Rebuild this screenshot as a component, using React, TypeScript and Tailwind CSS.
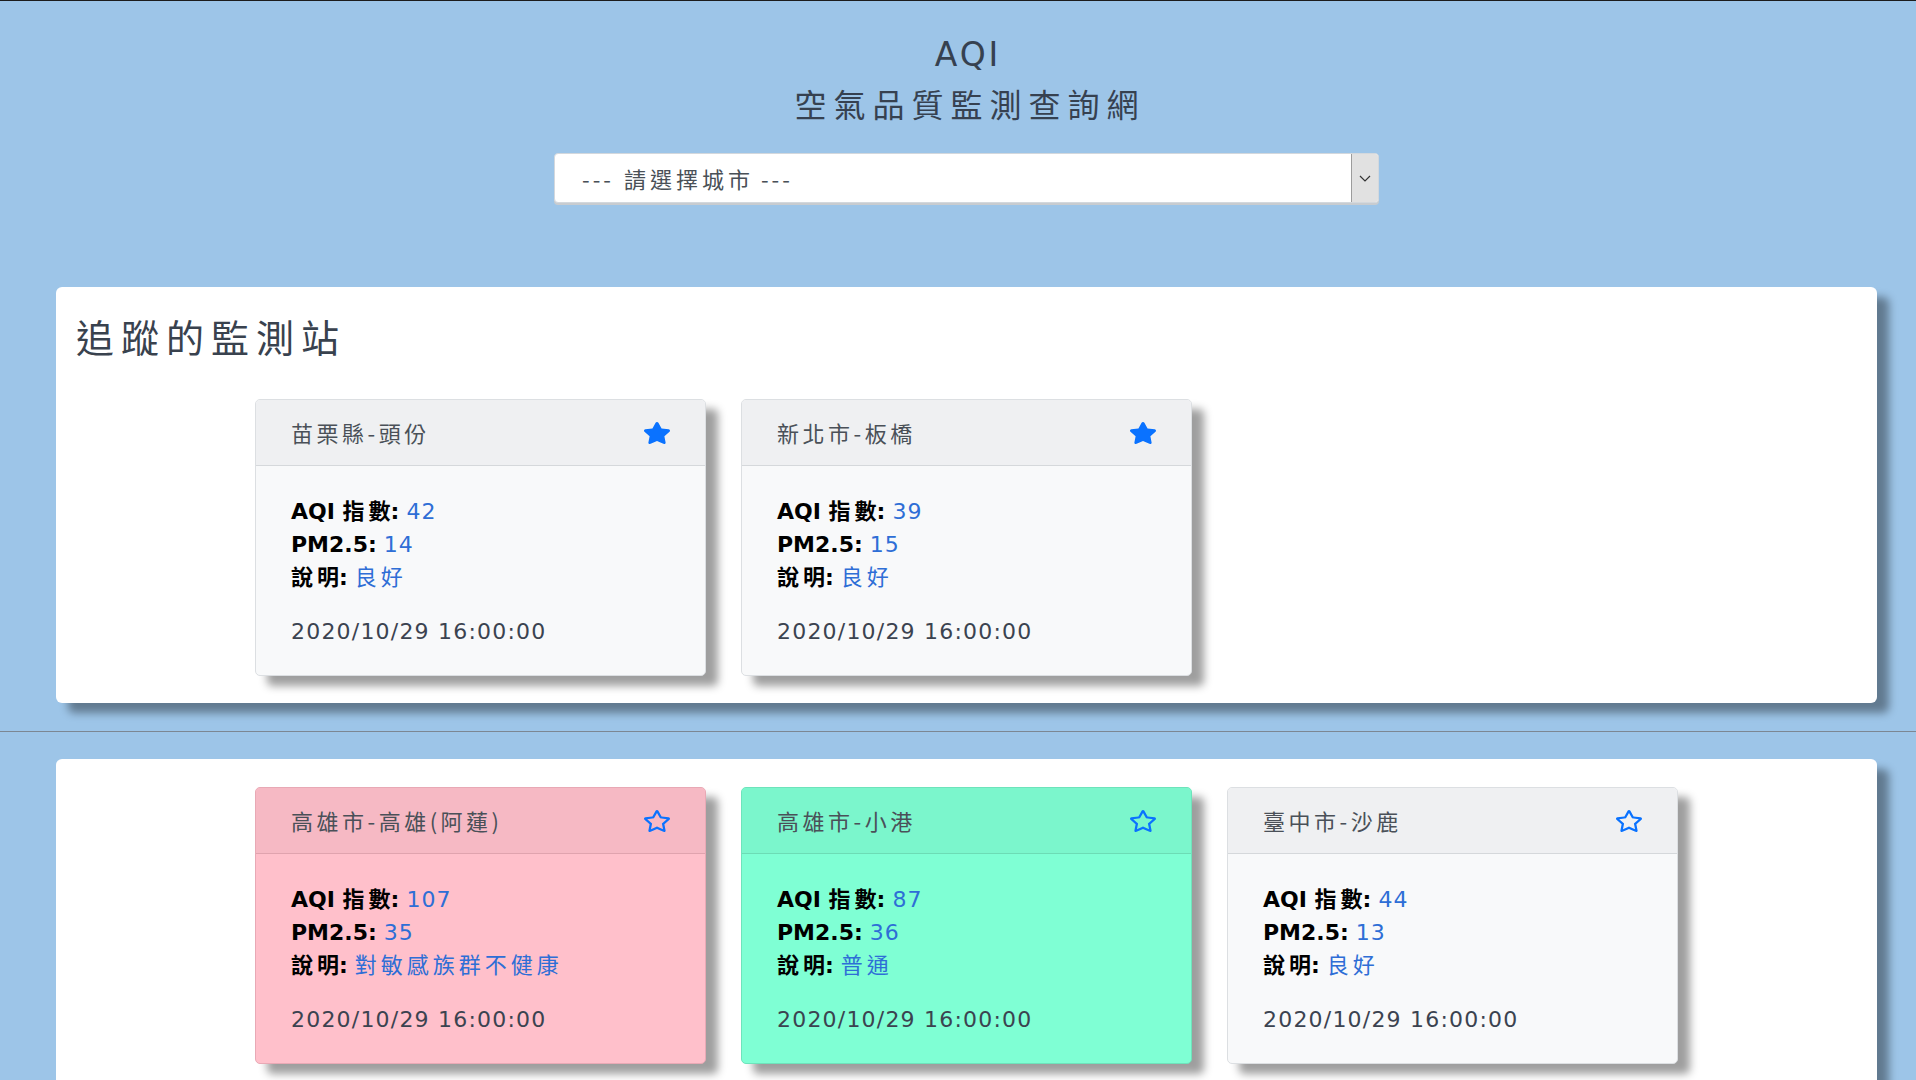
import React from "react";
import { FaStar, FaRegStar } from "react-icons/fa";

type Tone = "light" | "pink" | "green";

type Station = {
    name: string;
    aqi: number;
    pm25: number;
    status: string;
    time: string;
    tone: Tone;
    tracked: boolean;
};

const trackedStations: Station[] = [
    { name: "苗栗縣-頭份", aqi: 42, pm25: 14, status: "良好", time: "2020/10/29 16:00:00", tone: "light", tracked: true },
    { name: "新北市-板橋", aqi: 39, pm25: 15, status: "良好", time: "2020/10/29 16:00:00", tone: "light", tracked: true },
];

const cityStations: Station[] = [
    { name: "高雄市-高雄(阿蓮)", aqi: 107, pm25: 35, status: "對敏感族群不健康", time: "2020/10/29 16:00:00", tone: "pink", tracked: false },
    { name: "高雄市-小港", aqi: 87, pm25: 36, status: "普通", time: "2020/10/29 16:00:00", tone: "green", tracked: false },
    { name: "臺中市-沙鹿", aqi: 44, pm25: 13, status: "良好", time: "2020/10/29 16:00:00", tone: "light", tracked: false },
];

const tones: Record<Tone, { card: string; head: string }> = {
    light: { card: "bg-[#f8f9fa] border-[#dcdfe2]", head: "bg-[#eff0f2] border-[#d5d8db]" },
    pink: { card: "bg-[#ffc0cb] border-[#e8a9b5]", head: "bg-[#f6b9c4] border-[#e0a3ae]" },
    green: { card: "bg-[#7fffd4] border-[#6ee3bb]", head: "bg-[#7bf6cc] border-[#6cdcb5]" },
};

// CJK runs get extra tracking, but no trailing gap after the last glyph
function Zh({ text, className = "" }: { text: string; className?: string }) {
    return (
        <span className={className}>
            <span className="tracking-[4px]">{text.slice(0, -1)}</span>
            {text.slice(-1)}
        </span>
    );
}

function StationCard({ station }: { station: Station }) {
    const t = tones[station.tone];
    const Star = station.tracked ? FaStar : FaRegStar;

    return (
        <div className={`rounded-[5px] border overflow-hidden shadow-[12px_10px_8px_rgba(0,0,0,0.38)] ${t.card}`}>
            <div className={`h-[66px] border-b flex items-center justify-between pl-[35px] pr-[34px] ${t.head}`}>
                <span className="font-['Noto_Sans_CJK_TC',sans-serif] text-[22px] leading-[33px] tracking-[3.5px] text-[#4a5058]">
                    {station.name}
                </span>
                <Star className="w-[28px] h-[22px] text-[#0a72ff]" preserveAspectRatio="none" />
            </div>
            <div className="pt-[29px] pb-[27px] pl-[35px] font-['DejaVu_Sans','Noto_Sans_CJK_TC',sans-serif] text-[22px] leading-[33px] text-black">
                <div>
                    <b>AQI <Zh text="指數" />:</b> <span className="tracking-[1px] text-[#2e6ed6]">{station.aqi}</span>
                </div>
                <div>
                    <b>PM2.5:</b> <span className="tracking-[1px] text-[#2e6ed6]">{station.pm25}</span>
                </div>
                <div>
                    <b><Zh text="說明" />:</b> <Zh text={station.status} className="text-[#2e6ed6]" />
                </div>
                <div className="mt-[21px] tracking-[1.2px] text-[#3b4350]">{station.time}</div>
            </div>
        </div>
    );
}

function CardGrid({ stations }: { stations: Station[] }) {
    return (
        <div className="flex justify-center">
            <div className="grid grid-cols-[451px_451px_451px] gap-[35px]">
                {stations.map((s) => (
                    <StationCard key={s.name} station={s} />
                ))}
            </div>
        </div>
    );
}

export default function App() {
    return (
        <div className="min-h-screen bg-[#9dc5e8] border-t border-[#1c1c1c] overflow-hidden">
            <div className="pl-[56px] pr-[39px]">
                <h1 className="pt-[30px] text-center text-[#364150]">
                    <div className="pl-[3px] font-['DejaVu_Sans',sans-serif] text-[33px] leading-[48px] tracking-[3px]">AQI</div>
                    <div className="pl-[7px] font-['Noto_Sans_CJK_TC',sans-serif] text-[32px] leading-[48px] tracking-[7px]">
                        空氣品質監測查詢網
                    </div>
                </h1>

                <div className="mt-[26px] mx-auto w-[825px] h-[50px] flex rounded-[4px] border border-[#d3d8dd] bg-white shadow-[0_2px_0_#c8ccd0] overflow-hidden">
                    <div className="flex-1 flex items-center pl-[27px] font-['Noto_Sans_CJK_TC',sans-serif] text-[22px] text-[#495057]">
                        <span className="tracking-[3px]">---</span>
                        <span className="ml-[10px] mr-[11px]">
                            <Zh text="請選擇城市" />
                        </span>
                        <span className="tracking-[3px]">---</span>
                    </div>
                    <div className="w-[27px] flex items-center justify-center bg-[#e1e1e1] border-l border-[#9c9c9c]">
                        <svg width="12" height="7" viewBox="0 0 12 7">
                            <path d="M1 1l5 5 5-5" stroke="#333" strokeWidth="1.2" fill="none" />
                        </svg>
                    </div>
                </div>

                <section className="mt-[84px] rounded-[6px] bg-white pt-[26px] pb-[27px] shadow-[12px_10px_8px_rgba(0,0,0,0.38)]">
                    <h2 className="pl-[20px] font-['Noto_Sans_CJK_TC',sans-serif] text-[38px] leading-[46px] tracking-[7px] text-[#39424e]">
                        追蹤的監測站
                    </h2>
                    <div className="mt-[40px]">
                        <CardGrid stations={trackedStations} />
                    </div>
                </section>
            </div>

            <div className="mt-[28px] h-px bg-[#7c8793]" />

            <div className="pl-[56px] pr-[39px]">
                <section className="mt-[27px] rounded-[6px] bg-white pt-[28px] pb-[27px] shadow-[12px_10px_8px_rgba(0,0,0,0.38)]">
                    <CardGrid stations={cityStations} />
                </section>
            </div>
        </div>
    );
}
